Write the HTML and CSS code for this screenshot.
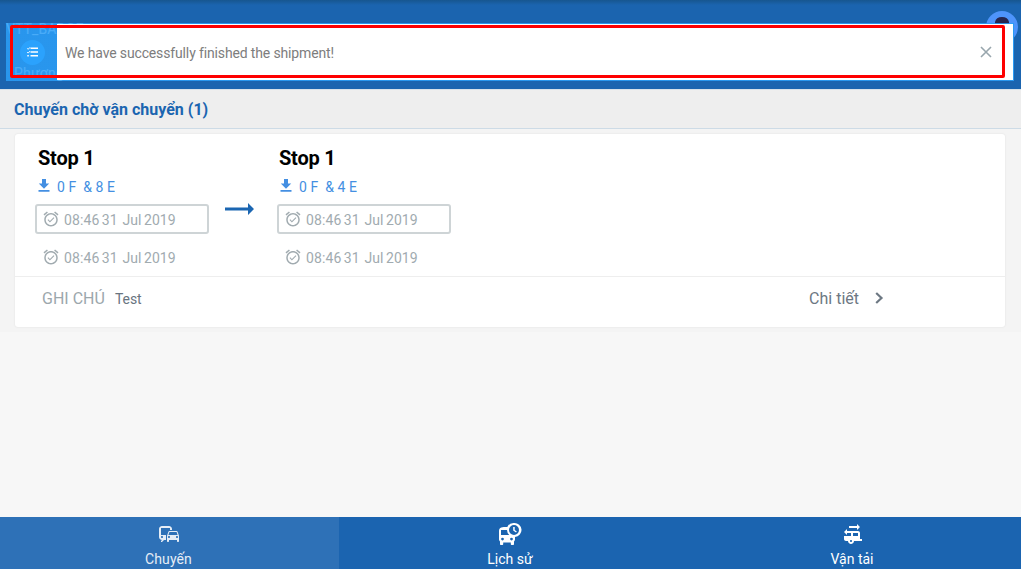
FILE: index.html
```html
<!DOCTYPE html>
<html lang="vi">
<head>
<meta charset="utf-8">
<title>Chuyến</title>
<link rel="stylesheet" href="styles.css">
</head>
<body>
<svg class="defs" aria-hidden="true">
  <symbol id="alarm" viewBox="0 0 24 24"><path d="M22 5.72l-4.6-3.86-1.29 1.53 4.6 3.86L22 5.72zM7.88 3.39L6.6 1.86 2 5.71l1.29 1.53 4.59-3.85zM12 4c-4.97 0-9 4.03-9 9s4.02 9 9 9c4.97 0 9-4.03 9-9s-4.03-9-9-9zm0 16c-3.87 0-7-3.13-7-7s3.13-7 7-7 7 3.13 7 7-3.13 7-7 7zm-1.46-5.47L8.41 12.4l-1.06 1.06 3.18 3.18 6-6-1.06-1.06-4.93 4.95z"/></symbol>
  <symbol id="download" viewBox="0 0 12 13"><path d="M4 0h4v4.500h3.200L6 9.700.8 4.500H4zM.5 11h11v1.800H.5z"/></symbol>
</svg>
<div class="app">
  <header class="header">
    <div class="user">
      <span class="user-org">VTT_BADGE</span>
      <span class="user-name">Phương Vũ</span>
    </div>
    <svg class="avatar" viewBox="0 0 32 32"><circle cx="16" cy="16" r="16" fill="#4e94fb"/><path d="M9 14V11q1-5 7-5t7 5v3z" fill="#26264f"/></svg>
  </header>
  <div class="toast">
    <div class="toast-accent"><span class="toast-badge"><svg width="11" height="10" viewBox="0 0 11 10"><path d="M3.500 1.200H11M3.500 5H11M3.500 8.800H11" stroke="#fff" stroke-width="1.600"/><path d="M.2 1.300l1 1L3 .3M.2 5.100l1 1 1.800-2" stroke="#fff" fill="none"/><path d="M.3 8h1.500v1.600H.3z" fill="#fff"/></svg></span></div>
    <div class="toast-body"><span class="toast-text">We have successfully finished the shipment!</span>
      <svg class="close" width="12" height="12" viewBox="0 0 12 12"><path d="M1 1l10 10M11 1L1 11" stroke="#98a6ad" stroke-width="1.6"/></svg>
    </div>
  </div>
  <div class="highlight"></div>
  <h1 class="section-title"><span>Chuyến chờ vận chuyển (1)</span></h1>
  <main class="content">
    <article class="card">
      <div class="route">
        <section class="stop">
          <h2 class="stop-title">Stop 1</h2>
          <div class="load"><svg width="12" height="13"><use href="#download"/></svg><span>0 F &nbsp;&amp; 8 E</span></div>
          <div class="time time-boxed"><svg width="18" height="18"><use href="#alarm"/></svg><span>08:46 31&nbsp; Jul 2019</span></div>
          <div class="time"><svg width="18" height="18"><use href="#alarm"/></svg><span>08:46 31&nbsp; Jul 2019</span></div>
        </section>
        <svg class="arrow" width="29" height="12" viewBox="0 0 29 12"><path d="M0 4.6h23V0l6 6-6 6V7.400H0z" fill="#1b66b2"/></svg>
        <section class="stop">
          <h2 class="stop-title stop-title-end">Stop 1</h2>
          <div class="load"><svg width="12" height="13"><use href="#download"/></svg><span>0 F &nbsp;&amp; 4 E</span></div>
          <div class="time time-boxed"><svg width="18" height="18"><use href="#alarm"/></svg><span>08:46 31&nbsp; Jul 2019</span></div>
          <div class="time"><svg width="18" height="18"><use href="#alarm"/></svg><span>08:46 31&nbsp; Jul 2019</span></div>
        </section>
      </div>
      <footer class="card-footer">
        <span class="note-label">GHI CHÚ</span><span class="note">Test</span>
        <a class="details"><span>Chi tiết</span><svg width="9" height="12" viewBox="0 0 9 12"><path d="M1.2 1l5.3 5-5.3 5" fill="none" stroke="#6d7883" stroke-width="2.2"/></svg></a>
      </footer>
    </article>
  </main>
  <nav class="tabs">
    <a class="tab tab-active"><svg width="24" height="24" viewBox="0 0 24 24"><path fill="currentColor" d="M12 4H5C3.34 4 2 5.34 2 7v8c0 1.66 1.34 3 3 3l-1 1v1h1l2-2.03L9 18v-5H4V5.98L13 6v2h2V7c0-1.66-1.34-3-3-3zM5 14c.55 0 1 .45 1 1s-.45 1-1 1-1-.45-1-1 .45-1 1-1zm15.57-4.34c-.14-.4-.52-.66-.97-.66h-7.19c-.46 0-.83.26-.98.66L10 13.77l.01 5.51c0 .38.31.72.69.72h.62c.38 0 .68-.38.68-.76V18h8v1.24c0 .38.31.76.69.76h.61c.38 0 .69-.34.69-.72l.01-1.37v-4.14l-1.43-4.11zM12.41 10h7.19l1.03 3h-9.25l1.03-3zM12 16c-.55 0-1-.45-1-1s.45-1 1-1 1 .45 1 1-.45 1-1 1zm8 0c-.55 0-1-.45-1-1s.45-1 1-1 1 .45 1 1-.45 1-1 1z"/></svg><span>Chuyến</span></a>
    <a class="tab"><svg width="24" height="24" viewBox="0 0 24 24"><path fill="currentColor" d="M16 1a7 7 0 0 0-6.7 4C4.2 5 1 5.300 1 9v8.500c0 .8.400 1.500 1 2V22c0 .6.400 1 1 1h1.200c.6 0 1-.4 1-1v-1.500h7.600V22c0 .6.400 1 1 1H15c.6 0 1-.4 1-1v-2.500c.6-.5 1-1.200 1-2V15A7 7 0 0 0 16 1zM4.500 18.500a1.400 1.400 0 1 1 0-2.800 1.400 1.400 0 0 1 0 2.800zm9 0a1.400 1.400 0 1 1 0-2.800 1.400 1.400 0 0 1 0 2.800zM3 13V8h6a7 7 0 0 0 2.200 5zM16 13a5 5 0 1 1 0-10 5 5 0 0 1 0 10zm.7-8h-1.500v3.600l2.800 2 .8-1.100-2.100-1.500z"/></svg><span>Lịch sử</span></a>
    <a class="tab tab-last"><svg width="24" height="24" viewBox="0 0 24 24"><path fill="currentColor" d="M20 15.960V11c0-1.100-.9-2-2-2H7V7L4 10l3 3v-2h4v3H4v3c0 1.100.9 2 2 2h2c0 1.660 1.340 3 3 3s3-1.340 3-3h8v-2h-2zM11 20c-.55 0-1-.45-1-1s.45-1 1-1 1 .45 1 1-.45 1-1 1zm7-6h-5v-3h5v3zM17 2v2H9v2h8v2l3-3z"/></svg><span>Vận tải</span></a>
  </nav>
</div>
</body>
</html>
```
FILE: styles.css
```css
* { box-sizing: border-box; }
body { margin: 0; font-family: Roboto, "Noto Sans", sans-serif; background: #f7f7f7; }
.defs { position: absolute; width: 0; height: 0; }
svg { flex: none; }
.app { position: relative; display: flex; flex-direction: column; height: 569px; overflow: hidden; }
.header { display: flex; justify-content: space-between; height: 89px; padding: 11px 3px 0 6px; background: linear-gradient(#17568f, #1b64af 5px, #1b64af); }
.user { display: flex; flex-direction: column; gap: 28px; padding-top: 10px; color: #fff; font-size: 14px; line-height: 16px; letter-spacing: .1px; }
.user-name { padding-left: 8px; letter-spacing: .2px; }
.avatar { width: 32px; height: 32px; }
.toast { position: absolute; left: 6px; top: 23px; width: 1008px; height: 58px; display: flex; border-right: 1px solid #2b9af3; background: linear-gradient(rgba(43, 158, 247, .86), rgba(43, 158, 247, .86)); }
.toast-accent { width: 51px; display: flex; align-items: center; justify-content: center; }
.toast-badge { display: flex; align-items: center; justify-content: center; width: 25px; height: 25px; border-radius: 50%; background: #2ba2fd; margin-left: 2px; }
.toast-body { flex: 1; display: flex; align-items: center; justify-content: space-between; margin: 1px 0; padding: 0 21px 0 8px; background: #fff; color: #7d7d7d; font-size: 14px; }
.toast-text { padding-top: 2px; letter-spacing: -.14px; }
.highlight { position: absolute; left: 10px; top: 25px; width: 995px; height: 53px; border: 3px solid #fe0000; border-radius: 2px; }
.section-title { margin: 0; height: 40px; display: flex; align-items: center; padding: 1px 14px 0; border-top: 1px solid #d7e1e9; border-bottom: 1px solid #cddbe6; background: #eee; color: #1b65b0; font-size: 16px; font-weight: 700; }
.content { flex: 1; padding: 5px 16px 0 15px; background: linear-gradient(#f4f4f4 203px, #f7f7f7 203px); }
.card { height: 193px; background: #fff; border-radius: 3px; box-shadow: 0 0 2px #ddd; }
.route { display: flex; height: 143px; padding: 12px 20px 0; border-bottom: 1px solid #eee; }
.stop { width: 174px; }
.stop-title { margin: 0 0 0 3px; font-size: 20px; line-height: 24px; font-weight: 700; color: #000; letter-spacing: -.2px; }
.stop-title-end { margin-left: 2px; }
.load { display: flex; align-items: center; gap: 7px; height: 20px; margin: 6px 0 8px 3px; color: #448fe2; fill: #448fe2; font-size: 14px; letter-spacing: .05px; }
.load svg { margin-top: -2px; }
.load span { padding-top: 1px; }
.time { display: flex; align-items: center; gap: 4px; height: 30px; margin-bottom: 8px; padding-left: 6px; border: 1px solid transparent; color: #a1abb0; fill: #a1abb0; font-size: 14px; letter-spacing: .1px; word-spacing: -1.2px; }
.time-boxed { border: 2px solid #ced4d6; border-radius: 3px; padding-left: 5px; }
.time span { padding-top: 1px; }
.arrow { margin: 57px 23px 0 16px; }
.card-footer { display: flex; align-items: center; height: 42px; padding: 0 121px 0 27px; }
.note-label { width: 73px; font-size: 16px; color: #9ca7ac; }
.note { padding-top: 2px; font-size: 14px; letter-spacing: -.1px; color: #69747f; }
.details { display: flex; align-items: center; gap: 16px; margin-left: auto; font-size: 16px; color: #6d7883; }
.tabs { display: grid; grid-template-columns: 339px 342px 340px; height: 52px; background: #1b64b0; }
.tab { display: flex; flex-direction: column; align-items: center; gap: 4px; padding-top: 5px; font-size: 14px; line-height: 18px; color: #fff; }
.tab-active { padding-right: 2px; letter-spacing: .1px; background: #2e71b7; color: #e5edf6; }
.tab-last { padding-left: 2px; }
```
